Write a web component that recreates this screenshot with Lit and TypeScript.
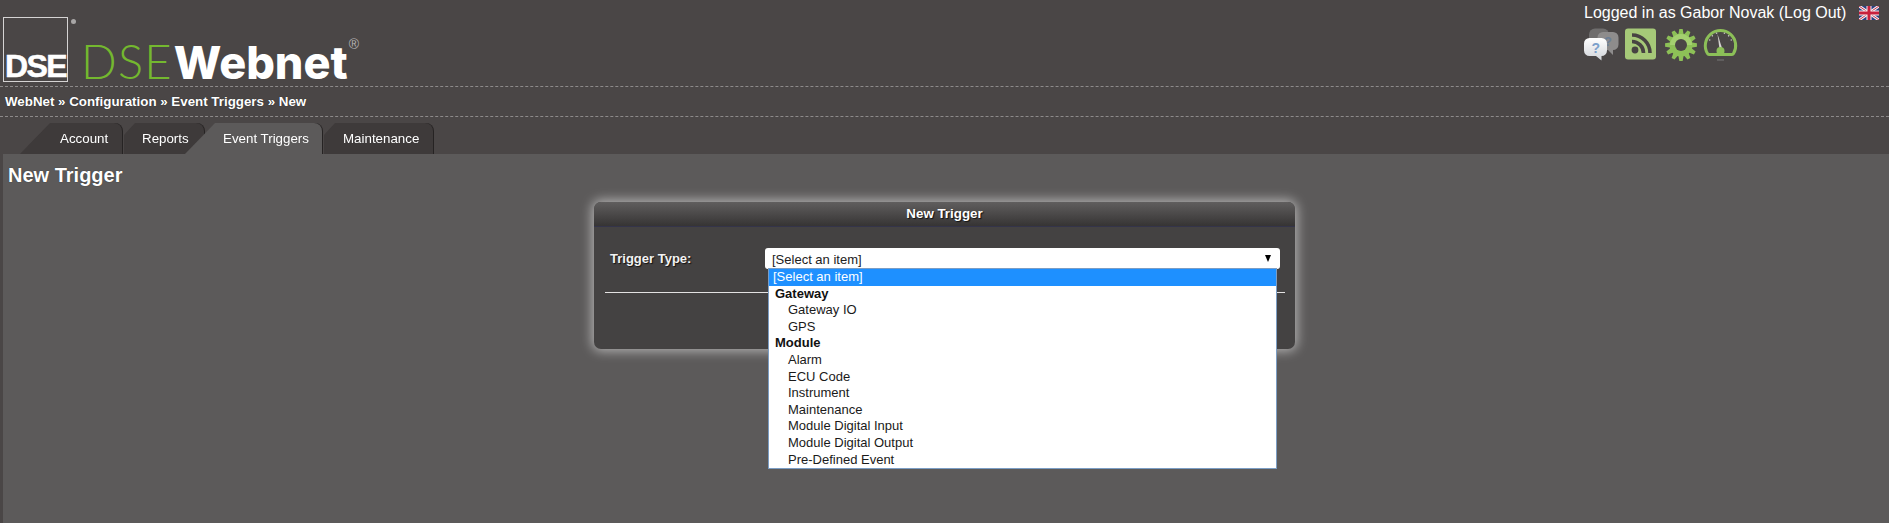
import { LitElement, html, css, svg } from "lit";
import { customElement } from "lit/decorators.js";

function gearPoints(cx: number, cy: number, ro: number, ri: number, n: number) {
  const pts: string[] = [];
  for (let i = 0; i < n; i++) {
    const a = (i / n) * Math.PI * 2;
    const w = (Math.PI * 2) / n;
    const p = (r: number, t: number) =>
      `${(cx + r * Math.cos(t)).toFixed(2)},${(cy + r * Math.sin(t)).toFixed(2)}`;
    pts.push(p(ri, a - w * 0.42), p(ro, a - w * 0.2), p(ro, a + w * 0.2), p(ri, a + w * 0.42));
  }
  return pts.join(" ");
}

const bubbles = html`<svg width="35" height="33" viewBox="0 0 35 33">
  <defs><linearGradient id="bw" x1="0" y1="0" x2="0" y2="1"><stop offset="0" stop-color="#fff"/><stop offset="1" stop-color="#d0d3d8"/></linearGradient></defs>
  <rect x="5" y="0.500" width="20" height="17" rx="6" fill="#6f6d6d"/>
  <path d="M19 4h10a5.500 5.500 0 0 1 5.500 5.500v7a5.500 5.500 0 0 1-5.500 5.500v5l-5-5h-5a5.500 5.500 0 0 1-5.500-5.500v-7a5.500 5.500 0 0 1 5.500-5.500z" fill="#8e8c8c"/>
  <text x="20" y="18" font-family="Liberation Sans" font-weight="700" font-size="13" fill="#6c7f96">?</text>
  <path d="M5.500 10h12a5.500 5.500 0 0 1 5.500 5.500v7a5.500 5.500 0 0 1-5.500 5.500v4.500l-5.500-4.500h-6.500a5.500 5.500 0 0 1-5.500-5.500v-7a5.500 5.500 0 0 1 5.500-5.500z" fill="url(#bw)"/>
  <text x="7.500" y="24.500" font-family="Liberation Sans" font-weight="700" font-size="14" fill="#7b9fcb">?</text>
</svg>`;

const rss = html`<svg width="31" height="32" viewBox="0 0 31 32">
  <rect x="0" y="0.500" width="31" height="31" rx="3" fill="#a6c978"/>
  <circle cx="10" cy="22" r="3.400" fill="#474342"/>
  <path d="M7 13.500a11.500 11.500 0 0 1 11.500 11.500" fill="none" stroke="#474342" stroke-width="3.600"/>
  <path d="M7 7a18 18 0 0 1 18 18" fill="none" stroke="#474342" stroke-width="3.600"/>
</svg>`;

const gear = html`<svg width="32" height="32" viewBox="0 0 32 32">
  <polygon points="${gearPoints(16, 16, 16, 11.5, 12)}" fill="#8dc057"/>
  <path d="M5 16a11 11 0 0 1 22 0z" fill="#a4d070"/>
  <circle cx="16" cy="16" r="6" fill="#4a4646"/>
</svg>`;

const gauge = html`<svg width="35" height="33" viewBox="0 0 35 33">
  <path d="M4.500 25.500A15.200 15.200 0 1 1 30.500 25.500Q30 26.500 29 26.500H6Q5 26.500 4.500 25.500Z" fill="#4a4646" stroke="#8cbf58" stroke-width="3" stroke-linejoin="round"/>
  ${[-70, -45, -20, 20, 45, 70].map((d) => {
    const a = ((d - 90) * Math.PI) / 180;
    return svg`<circle cx="${17.5 + 11.500 * Math.cos(a)}" cy="${16 + 11.500 * Math.sin(a)}" r="0.800" fill="#c5c3c0"/>`;
  })}
  <path d="M14.500 6l4.500 14-2.500 1z" fill="#d5d3d0"/>
  <path d="M13.500 23a4 4 0 0 1 8 0q0 3-1.500 4h-5q-1.500-1-1.500-4z" fill="#8cbf58"/>
  <path d="M14 32h7" stroke="#777" stroke-width="1"/>
</svg>`;

const flag = html`<svg width="20" height="14" viewBox="0 0 20 14">
  <rect width="20" height="14" fill="#2a3f80"/>
  <path d="M0 0L20 14M20 0L0 14" stroke="#f4eef0" stroke-width="3"/>
  <path d="M0 0L20 14M20 0L0 14" stroke="#c8344c" stroke-width="1"/>
  <path d="M10 0V14M0 7H20" stroke="#f4eef0" stroke-width="5"/>
  <path d="M10 0V14M0 7H20" stroke="#c8203c" stroke-width="3"/>
</svg>`;

const options: [string, string][] = [
  ["group", "Gateway"],
  ["item", "Gateway IO"],
  ["item", "GPS"],
  ["group", "Module"],
  ["item", "Alarm"],
  ["item", "ECU Code"],
  ["item", "Instrument"],
  ["item", "Maintenance"],
  ["item", "Module Digital Input"],
  ["item", "Module Digital Output"],
  ["item", "Pre-Defined Event"],
];

@customElement("app-root")
export class AppRoot extends LitElement {
  static styles = css`
    :host {
      display: flex;
      flex-direction: column;
      height: 523px;
      overflow: hidden;
      background: #4a4646;
      color: #fff;
      font-family: "Liberation Sans", Arial, sans-serif;
    }
    .top {
      height: 87px;
      box-sizing: border-box;
      border-bottom: 1px dashed #8d8a8a;
      display: flex;
      justify-content: space-between;
      flex: none;
    }
    .brand {
      display: flex;
      align-items: flex-start;
      padding: 17px 0 0 3px;
    }
    .box {
      width: 65px;
      height: 65px;
      box-sizing: border-box;
      border: 1px solid #d5d3d3;
      display: flex;
      align-items: flex-end;
      justify-content: center;
    }
    .box span {
      font-weight: 700;
      font-size: 32px;
      line-height: 29px;
      letter-spacing: -1.6px;
      -webkit-text-stroke: 0.6px #fff;
    }
    .reg-s {
      width: 5px;
      height: 5px;
      border-radius: 50%;
      background: #a8a6a6;
      margin: 2px 0 0 3px;
      flex: none;
    }
    .word {
      display: flex;
      align-items: baseline;
      margin: 18px 0 0 5px;
      line-height: 52px;
      height: 52px;
    }
    .dse {
      font-family: Lato, sans-serif;
      font-weight: 300;
      font-size: 47px;
      color: #74b82f;
      letter-spacing: 1.2px;
      margin-right: 1px;
    }
    .webnet {
      font-family: Inter, sans-serif;
      font-weight: 800;
      font-size: 45px;
      letter-spacing: 0;
    }
    .reg {
      font-size: 14px;
      color: #b5b3b3;
      align-self: flex-start;
      line-height: 14px;
      margin: 2px 0 0 1px;
    }
    .account {
      display: flex;
      flex-direction: column;
      padding: 4px 10px 0 0;
      width: 305px;
      box-sizing: border-box;
    }
    .who {
      display: flex;
      justify-content: space-between;
      align-items: center;
      font-size: 16px;
      height: 18px;
    }
    .icons {
      display: flex;
      align-items: flex-start;
      margin-top: 6px;
    }
    .icons svg { display: block; }
    .icons svg:nth-child(1) { margin-right: 6px; }
    .icons svg:nth-child(2) { margin-right: 9px; }
    .icons svg:nth-child(3) { margin-right: 6px; margin-top: 1px; }
    .crumb {
      flex: none;
      height: 30px;
      box-sizing: border-box;
      border-bottom: 1px dashed #8d8a8a;
      font-weight: 700;
      font-size: 13.33px;
      line-height: 29px;
      padding-left: 5px;
      text-shadow: 0 0 1px #222;
    }
    .tabs {
      flex: none;
      height: 37px;
      box-sizing: border-box;
      padding: 6px 0 0 20px;
      display: flex;
      align-items: stretch;
    }
    .tabwrap {
      filter: drop-shadow(1.5px 0 0 #262323);
      display: flex;
    }
    .tab {
      background: #3e3a3a;
      font-size: 13.33px;
      line-height: 32px;
      border-radius: 0 8px 0 0;
      box-sizing: border-box;
    }
    .account-tab {
      width: 102px;
      padding-left: 40px;
      clip-path: polygon(0 100%, 30px 0, 100% 0, 100% 100%);
    }
    .reports-tab {
      width: 80px;
      margin-left: 2px;
      padding-left: 18px;
      clip-path: polygon(0 100%, 0 12px, 11px 0, 100% 0, 100% 12px, 63px 100%);
    }
    .event-wrap {
      margin-left: -19px;
      z-index: 1;
    }
    .event-tab {
      width: 137px;
      padding-left: 38px;
      background: #5c5a5a;
      clip-path: polygon(0 100%, 30px 0, 100% 0, 100% 100%);
    }
    .maint-tab {
      width: 109px;
      margin-left: 2px;
      padding-left: 19px;
      clip-path: polygon(0 100%, 0 12px, 11px 0, 100% 0, 100% 100%);
    }
    .panel {
      flex: 1;
      margin-left: 3px;
      background: #5c5a5a;
      padding-right: 3px;
      position: relative;
      z-index: 2;
    }
    h1 {
      margin: 0;
      font-size: 20px;
      font-weight: 700;
      line-height: 24px;
      padding: 9px 0 0 5px;
      text-shadow: 0 0 1px #222;
    }
    .dialog {
      width: 701px;
      height: 147px;
      margin: 15px auto 0;
      border-radius: 7px;
      background: #444242;
      box-shadow: 0 0 12px 2px rgba(255, 255, 255, 0.55);
      display: flex;
      flex-direction: column;
    }
    .dhead {
      height: 25px;
      flex: none;
      box-sizing: border-box;
      border-radius: 7px 7px 0 0;
      border-bottom: 1px solid #34344a;
      background: linear-gradient(#605e5e, #363434);
      font-weight: 700;
      font-size: 13.33px;
      line-height: 24px;
      text-align: center;
      text-shadow: 1px 1px 1px #111;
    }
    .dbody {
      padding: 21px 10px 0 11px;
    }
    .row {
      display: flex;
      align-items: flex-start;
      height: 45px;
      box-sizing: border-box;
      border-bottom: 1px solid #e4e2e2;
    }
    label {
      width: 160px;
      flex: none;
      padding-left: 5px;
      box-sizing: border-box;
      font-weight: 700;
      font-size: 13px;
      line-height: 22px;
      color: #f2f2f2;
      text-shadow: 1px 1px 1px #111;
    }
    .select {
      position: relative;
      width: 515px;
      height: 21px;
      background: #fff;
      border-radius: 3px;
      color: #222;
      font-size: 13px;
      line-height: 23px;
      padding-left: 7px;
      box-sizing: border-box;
    }
    .arrow {
      position: absolute;
      right: 9px;
      top: 7px;
      width: 0;
      height: 0;
      border-left: 3.5px solid transparent;
      border-right: 3.5px solid transparent;
      border-top: 7px solid #000;
    }
    .list {
      position: absolute;
      left: 3px;
      top: 20px;
      width: 509px;
      box-sizing: border-box;
      background: #fff;
      border: 1px solid #7b9dc4;
      color: #1a1a1a;
      line-height: 16.6px;
      z-index: 3;
    }
    .list div {
      height: 16.6px;
      white-space: nowrap;
    }
    .sel { background: #1e90ff; color: #fff; padding-left: 4px; }
    .group { font-weight: 700; padding-left: 6px; color: #111; }
    .item { padding-left: 19px; }
  `;

  render() {
    return html`
      <div class="top">
        <div class="brand">
          <div class="box"><span>DSE</span></div>
          <div class="reg-s"></div>
          <div class="word">
            <span class="dse">DSE</span><span class="webnet">Webnet</span><span class="reg">®</span>
          </div>
        </div>
        <div class="account">
          <div class="who"><span>Logged in as Gabor Novak (Log Out)</span>${flag}</div>
          <div class="icons">${bubbles}${rss}${gear}${gauge}</div>
        </div>
      </div>
      <div class="crumb">WebNet » Configuration » Event Triggers » New</div>
      <div class="tabs">
        <div class="tabwrap"><div class="tab account-tab">Account</div></div>
        <div class="tabwrap"><div class="tab reports-tab">Reports</div></div>
        <div class="tabwrap event-wrap"><div class="tab event-tab">Event Triggers</div></div>
        <div class="tabwrap"><div class="tab maint-tab">Maintenance</div></div>
      </div>
      <div class="panel">
        <h1>New Trigger</h1>
        <div class="dialog">
          <div class="dhead">New Trigger</div>
          <div class="dbody">
            <div class="row">
              <label>Trigger Type:</label>
              <div class="select">
                [Select an item]<span class="arrow"></span>
                <div class="list">
                  <div class="sel">[Select an item]</div>
                  ${options.map(([k, t]) => html`<div class="${k}">${t}</div>`)}
                </div>
              </div>
            </div>
          </div>
        </div>
      </div>
    `;
  }
}
